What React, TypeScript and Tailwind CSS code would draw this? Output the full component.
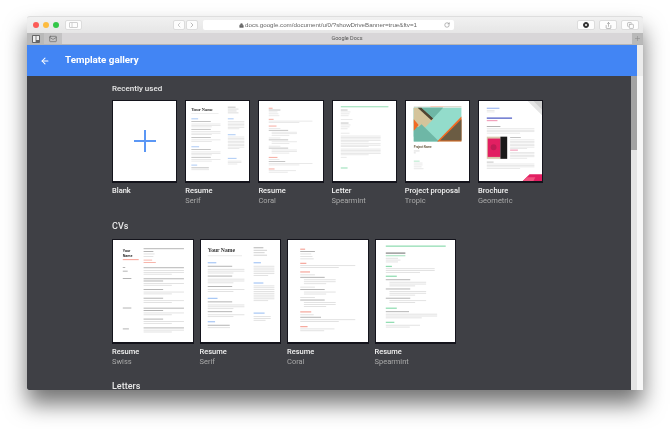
import { ArrowLeft, ChevronLeft, ChevronRight, Lock, RotateCw, Share, Copy, Plus, Mail } from 'lucide-react'

const GRAY = '#dedede'
const DARK = '#a8a8a8'
const BLUE = '#a9c8f5'
const CORAL = '#f6a99e'
const GREEN = '#8fdcb0'

type Bar = [number, number, number, string?, number?]

// lines of fake body text in a thumbnail
function Bars({ items }: { items: Bar[] }) {
  return (
    <>
      {items.map(([x, y, w, c, h], i) => (
        <rect key={i} x={x} y={y} width={w} height={h ?? 0.7} fill={c ?? GRAY} />
      ))}
    </>
  )
}

function Para(x: number, y: number, w: number, n: number, step = 1.5): Bar[] {
  return Array.from({ length: n }, (_, i) => [x, y + i * step, i === n - 1 ? w * 0.7 : w] as Bar)
}

function Doc({ children }: { children: React.ReactNode }) {
  return (
    <svg viewBox="0 0 65 83" className="block w-full h-full" preserveAspectRatio="none">
      {children}
    </svg>
  )
}

function Blank() {
  return (
    <div className="w-full h-full flex items-center justify-center">
      <svg width="24" height="24" viewBox="0 0 24 24">
        <rect x="11" y="1" width="2" height="22" fill="#5b97f5" />
        <rect x="1" y="11" width="22" height="2" fill="#5b97f5" />
      </svg>
    </div>
  )
}

function SerifDoc() {
  return (
    <Doc>
      <text x="5.5" y="10" fontSize="4.6" fontWeight="700" fontFamily="Liberation Serif, serif" fill="#333">Your Name</text>
      <Bars items={[
        [5.5, 12.5, 28, '#e6e6e6'],
        [43, 6, 8, DARK], [43, 8, 11, '#ccc'], [43, 10, 9, '#ccc'], [43, 12, 11, '#ccc'],
        [5.5, 18, 7, BLUE, 1],
        [5.5, 21, 20, DARK], ...Para(5.5, 23.5, 30, 3),
        [5.5, 29, 20, DARK], ...Para(5.5, 31.5, 30, 3),
        [5.5, 37.5, 20, DARK], ...Para(5.5, 40, 30, 2),
        [5.5, 47, 8, BLUE, 1],
        [5.5, 50, 20, DARK], ...Para(5.5, 52.5, 30, 3),
        [5.5, 58, 20, DARK], ...Para(5.5, 60.5, 30, 2),
        [5.5, 66, 6, BLUE, 1],
        [5.5, 69, 18, DARK], ...Para(5.5, 71, 26, 1),
        [43, 18, 6, BLUE, 1], ...Para(43, 21, 17, 6),
        [43, 34.5, 8, BLUE, 1], ...Para(43, 37, 17, 9),
        [43, 59, 9, BLUE, 1], ...Para(43, 62, 14, 3),
      ]} />
    </Doc>
  )
}

function CoralDoc() {
  return (
    <Doc>
      <Bars items={[
        [10, 7, 4, CORAL, 1], [10, 9, 12, DARK], [10, 11, 9], [10, 13, 10], [10, 15, 11],
        [10, 18.5, 5, CORAL, 1], ...Para(10, 20.5, 45, 2),
        [10, 25.5, 8, CORAL, 1],
        [10, 28, 12], [10, 30, 20, DARK], ...Para(13, 32, 26, 3, 1.6),
        [10, 38, 12], [10, 40, 20, DARK], ...Para(13, 42, 26, 2, 1.6),
        [10, 46.5, 12], [10, 48.5, 20, DARK], ...Para(13, 50.5, 26, 3, 1.6),
        [10, 58, 9, CORAL, 1], [10, 60.5, 11], [10, 62.5, 17, DARK], ...Para(10, 64.5, 45, 2),
        [10, 70, 6, CORAL, 1], ...Para(10, 72, 28, 2),
      ]} />
    </Doc>
  )
}

function LetterDoc() {
  return (
    <Doc>
      <Bars items={[
        [8, 5.5, 49, GREEN, 1],
        [8, 9, 7, DARK], [8, 11, 10], [8, 13, 9], [8, 15, 8],
        [8, 19, 12], [8, 22.5, 8, DARK], [8, 24.5, 10], [8, 26.5, 9], [8, 28.5, 7],
        [8, 33, 9],
        ...Para(8, 36, 41, 5), ...Para(8, 44, 41, 3), ...Para(8, 49.5, 41, 5),
        [8, 58, 6],
        [8, 69, 7, GREEN, 1],
      ]} />
    </Doc>
  )
}

function TropicDoc() {
  return (
    <Doc>
      <Bars items={[[8, 5.5, 17, '#e5e2dc', 1], [25, 5.5, 14, '#f5b8a0', 1], [39, 5.5, 18, '#cfcabd', 1]]} />
      <rect x="8" y="7" width="49" height="35" fill="#93dccb" />
      <polygon points="8,7 38,7 8,37" fill="#6eb7a6" />
      <polygon points="8,7 16,7 28,19 16,31 8,23" fill="#d4c49b" />
      <polygon points="12,7 16,7 28,18 26,20" fill="#4e4432" />
      <polygon points="16,7 38,7 28,18" fill="#6eb7a6" />
      <polygon points="8,19 13,25 8,31" fill="#f26a23" />
      <polygon points="8,31 16,24 34,42 8,42" fill="#6eb7a6" />
      <polygon points="57,16 57,42 32,42" fill="#f26a23" />
      <polygon points="57,19 57,41 35,41" fill="#6b5c43" />
      <text x="8" y="49" fontSize="3" fontWeight="700" fontFamily="Roboto, sans-serif" fill="#6b5c43">Project Name</text>
      <Bars items={[[8, 51.5, 6, '#ccc'], [8, 53.5, 2, '#ccc'], [8, 62, 6, GREEN], [8, 64, 9], [8, 66, 9], [8, 68, 8], [8, 70, 10]]} />
    </Doc>
  )
}

function BrochureDoc() {
  return (
    <Doc>
      <polygon points="50,0 65,0 65,15" fill="#e4e4e4" />
      <polygon points="56,0 65,0 65,9" fill="#cfcfcf" />
      <Bars items={[[8, 7, 13, '#8aa8ee', 1], [8, 9.5, 8], [8, 11, 8]]} />
      <rect x="8" y="17" width="26" height="1.6" fill="#6f7bd0" />
      <rect x="8" y="20" width="11" height="0.9" fill="#ec7fa3" />
      <rect x="8" y="26" width="14" height="0.9" fill={DARK} />
      <Bars items={Para(8, 28.5, 49, 4)} />
      <rect x="8" y="37" width="14" height="23" fill="#d9c7ad" />
      <rect x="9" y="39" width="13" height="19" fill="#e21f62" />
      <circle cx="15" cy="48" r="3" fill="#c01b55" />
      <rect x="22" y="37" width="7" height="23" fill="#1a1a1a" />
      <Bars items={[[32, 37.5, 11, DARK], ...Para(32, 40, 25, 7)]} />
      <rect x="32" y="50.5" width="8" height="0.9" fill="#ec7fa3" />
      <Bars items={Para(32, 53, 25, 5)} />
      <Bars items={[[8, 63, 7, DARK], ...Para(8, 65, 49, 4)]} />
      <polygon points="45,83 52,76 65,76 65,83" fill="#e21f62" />
      <polygon points="45,83 49,79 58,79 56,83" fill="#f0527f" />
    </Doc>
  )
}

function SwissDoc() {
  return (
    <Doc>
      <text x="8" y="10" fontSize="3" fontWeight="700" fontFamily="Roboto, sans-serif" fill="#333">Your</text>
      <text x="8" y="13.5" fontSize="3" fontWeight="700" fontFamily="Roboto, sans-serif" fill="#333">Name</text>
      <Bars items={[
        [8, 15.5, 13, CORAL, 0.9],
        [25, 6.5, 33, '#c4c4c4', 1], [25, 9, 8, DARK], [25, 11, 9], [25, 13, 8], [25, 16, 7, CORAL], [25, 18, 10, CORAL],
        [8, 22, 2, DARK], [8, 25, 4, DARK],
        [25, 22, 33, '#c4c4c4', 1], ...Para(25, 24.5, 33, 3),
        [8, 31, 7, DARK],
        [25, 31, 33, '#c4c4c4', 1], [25, 33, 16, DARK], ...Para(25, 35, 33, 2),
        [25, 40, 16, DARK], ...Para(25, 42, 33, 2),
        [25, 47, 16, DARK], ...Para(25, 49, 33, 2),
        [8, 55, 7, DARK],
        [25, 55, 33, '#c4c4c4', 1], [25, 57, 16, DARK], ...Para(25, 59, 33, 2),
        [25, 64, 16, DARK], ...Para(25, 66, 33, 2),
        [8, 72, 5, DARK],
        [25, 71, 33, '#c4c4c4', 1], ...Para(25, 73, 33, 2),
      ]} />
    </Doc>
  )
}

function SpearmintDoc() {
  return (
    <Doc>
      <Bars items={[
        [8, 4.5, 49, GREEN, 1],
        [8, 10, 16, DARK, 1.4], [8, 12.5, 16, GREEN], [8, 14.5, 10], [8, 16, 12], [8, 17.5, 10],
        [8, 21, 5, GREEN, 1], ...Para(8, 23, 40, 3),
        [8, 29, 9, GREEN, 1],
        [8, 32, 20, DARK], ...Para(11, 34, 30, 3),
        [8, 39.5, 20, DARK], ...Para(11, 41.5, 30, 3),
        [8, 47, 20, DARK], ...Para(11, 49, 30, 2),
        [8, 55, 9, GREEN, 1],
        [8, 58, 19, DARK], ...Para(8, 60, 42, 3),
        [8, 66.5, 7, GREEN, 1], ...Para(8, 69, 28, 2),
      ]} />
    </Doc>
  )
}

function Card({ title, sub, className, children }: { title: string, sub?: string, className: string, children: React.ReactNode }) {
  return (
    <div className={className}>
      <div className="bg-white h-full border border-[#14141c] border-b-2 box-border overflow-hidden">{children}</div>
      <p className="mt-[3px] text-[7.5px] leading-[10px] font-medium text-[#f1f1f1]">{title}</p>
      {sub && <p className="text-[7.5px] leading-[10px] text-[#a9a9a9]">{sub}</p>}
    </div>
  )
}

const recent = [
  { title: 'Blank', doc: <Blank /> },
  { title: 'Resume', sub: 'Serif', doc: <SerifDoc /> },
  { title: 'Resume', sub: 'Coral', doc: <CoralDoc /> },
  { title: 'Letter', sub: 'Spearmint', doc: <LetterDoc /> },
  { title: 'Project proposal', sub: 'Tropic', doc: <TropicDoc /> },
  { title: 'Brochure', sub: 'Geometric', doc: <BrochureDoc /> },
]

const cvs = [
  { title: 'Resume', sub: 'Swiss', doc: <SwissDoc /> },
  { title: 'Resume', sub: 'Serif', doc: <SerifDoc /> },
  { title: 'Resume', sub: 'Coral', doc: <CoralDoc /> },
  { title: 'Resume', sub: 'Spearmint', doc: <SpearmintDoc /> },
]

function ToolButton({ className, children }: { className: string, children?: React.ReactNode }) {
  return (
    <div className={`h-[10px] bg-white/90 rounded-[2px] border border-[#dcdcdc] flex items-center justify-center ${className}`}>
      {children}
    </div>
  )
}

export default function App() {
  return (
    <div className="w-[670px] h-[429px] bg-white overflow-hidden pt-[16px] pl-[27px] blur-[0.35px]" style={{ fontFamily: 'Roboto, sans-serif' }}>
      <div className="w-[616px] h-[374px] flex flex-col rounded-t-[3px] bg-[#ececec] shadow-[0_14px_22px_rgba(0,0,0,0.55)]">
        {/* toolbar */}
        <div className="h-[17px] shrink-0 flex items-center bg-gradient-to-b from-[#f1f1f1] to-[#e6e6e6] border-t border-[#dedede] rounded-t-[3px] pl-[6px] pr-[4px]">
          <div className="flex gap-[4px]">
            <span className="w-[6px] h-[6px] rounded-full bg-[#fc5b57]" />
            <span className="w-[6px] h-[6px] rounded-full bg-[#fdbc40]" />
            <span className="w-[6px] h-[6px] rounded-full bg-[#33c748]" />
          </div>
          <ToolButton className="w-[17px] ml-[6px]">
            <svg width="9" height="6" viewBox="0 0 9 6" fill="none" stroke="#c4c4c4" strokeWidth="0.8">
              <rect x="0.5" y="0.5" width="8" height="5" rx="0.5" />
              <path d="M3 0.5v5" />
            </svg>
          </ToolButton>
          <ToolButton className="w-[12px] ml-[91px]">
            <ChevronLeft size={8} className="text-[#b0b0b0]" />
          </ToolButton>
          <ToolButton className="w-[12px] ml-[1px]">
            <ChevronRight size={8} className="text-[#999]" />
          </ToolButton>
          <div className="w-[251px] h-[10px] ml-[5px] bg-white rounded-[2px] flex items-center pl-[36px] pr-[2px]">
            <Lock size={5} className="text-[#666] mr-[1px]" fill="#666" />
            <span className="text-[6.2px] leading-none text-[#666] whitespace-nowrap" style={{ fontFamily: 'Liberation Sans, sans-serif' }}>
              docs.google.com/document/u/0/?showDriveBanner=true&amp;ftv=1
            </span>
            <RotateCw size={6} className="text-[#777] ml-auto mr-[2px]" />
          </div>
          <ToolButton className="w-[18px] ml-auto">
            <span className="w-[6px] h-[6px] rounded-full bg-[#333] border border-[#333] flex items-center justify-center">
              <span className="w-[2px] h-[2px] rounded-full bg-white" />
            </span>
          </ToolButton>
          <ToolButton className="w-[18px] ml-[4px]">
            <Share size={7} className="text-[#888]" />
          </ToolButton>
          <ToolButton className="w-[18px] ml-[4px]">
            <Copy size={7} className="text-[#999]" />
          </ToolButton>
        </div>

        {/* tab bar */}
        <div className="h-[12px] shrink-0 flex items-center bg-[#d8d6d8] border-b border-[#b5b5b5] text-[5.5px] text-[#555]">
          <div className="w-[17px] h-full bg-[#b9b9b9] flex items-center justify-center">
            <svg width="8" height="8" viewBox="0 0 8 8">
              <rect width="8" height="8" rx="1" fill="#666" />
              <rect x="1" y="1" width="2.6" height="6" fill="#eee" />
              <rect x="4.4" y="1" width="2.6" height="4" fill="#eee" />
            </svg>
          </div>
          <div className="w-[18px] h-full bg-[#c4c3c4] flex items-center justify-center">
            <Mail size={8} className="text-[#666]" />
          </div>
          <span className="flex-1 text-center">Google Docs</span>
          <div className="w-[11px] h-full bg-[#b9b9b9] flex items-center justify-center">
            <Plus size={7} className="text-[#8c8c8c]" />
          </div>
        </div>

        {/* blue header */}
        <div className="w-[610px] h-[31px] shrink-0 bg-[#4285f4] flex items-center text-white">
          <ArrowLeft size={10} strokeWidth={2.5} className="ml-[13px]" />
          <h1 className="ml-[15px] text-[9.8px] font-bold">Template gallery</h1>
        </div>

        {/* gallery + scrollbar */}
        <div className="flex-1 min-h-0 flex">
          <div className="w-[604px] bg-[#3f4045] overflow-hidden pl-[85px] pt-[8px] rounded-bl-[2px]">
            <h2 className="text-[8px] leading-[10px] font-medium text-[#e8e8e8]">Recently used</h2>
            <div className="flex gap-[8px] mt-[6px]">
              {recent.map((t, i) => (
                <Card key={i} title={t.title} sub={t.sub} className="w-[65.2px] h-[83px]">{t.doc}</Card>
              ))}
            </div>
            <h2 className="mt-[38px] text-[9px] leading-[10px] font-medium text-[#e8e8e8]">CVs</h2>
            <div className="flex gap-[6px] mt-[8px]">
              {cvs.map((t, i) => (
                <Card key={i} title={t.title} sub={t.sub} className="w-[81.5px] h-[105px]">{t.doc}</Card>
              ))}
            </div>
            <h2 className="mt-[37px] text-[9px] leading-[10px] font-medium text-[#e8e8e8]">Letters</h2>
          </div>
          <div className="w-[6px] bg-[#e4e4e4]">
            <div className="h-[74px] bg-[#a3a3a3]" />
          </div>
          <div className="w-[6px] bg-[#f7f7f7]" />
        </div>
      </div>
    </div>
  )
}
